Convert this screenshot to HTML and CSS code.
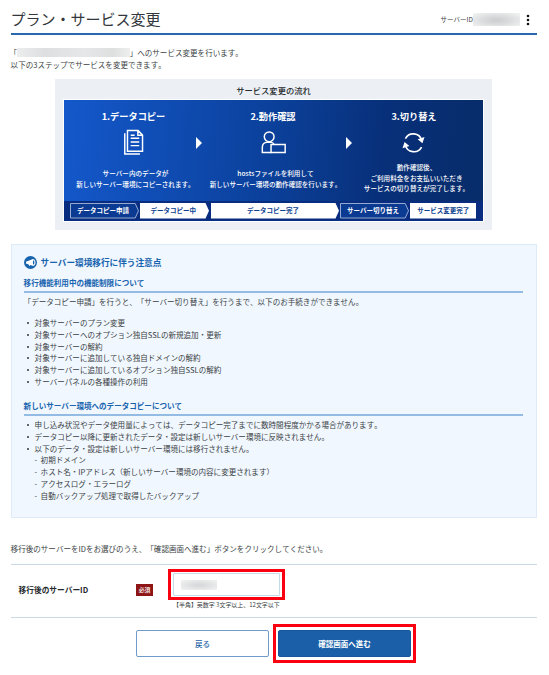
FILE: index.html
```html
<!DOCTYPE html>
<html lang="ja">
<head>
<meta charset="utf-8">
<title>プラン・サービス変更</title>
<link rel="stylesheet" href="styles.css">
</head>
<body>
<main class="page">
  <header class="head">
    <h1>プラン・サービス変更</h1>
    <div class="account">
      <span>サーバーID</span><span class="mask mask-id"></span>
      <svg class="dots" viewBox="0 0 4 12"><circle cx="2" cy="2" r="1.3"/><circle cx="2" cy="6" r="1.3"/><circle cx="2" cy="10" r="1.3"/></svg>
    </div>
  </header>

  <div class="intro">
    <p class="quote">「<span class="mask mask-plan"></span>」へのサービス変更を行います。</p>
    <p>以下の3ステップでサービスを変更できます。</p>
  </div>

  <section class="flow">
    <h2>サービス変更の流れ</h2>
    <div class="panel">
      <div class="steps">
        <div class="step first">
          <h3>1.データコピー</h3>
          <svg class="icon" viewBox="0 0 26 26"><g fill="none" stroke="#fff" stroke-width="1.4"><path d="M7.2 1.5h10.2l4.3 4.4v15.6H7.2zM17.2 1.5v4.6h4.5M10.3 9h8.2M10.3 12.5h8.2M10.3 16h8.2M10.3 6h3.8"/><path d="M4.6 4.2v19.8h14.6"/></g></svg>
          <p>サーバー内のデータが<br>新しいサーバー環境にコピーされます。</p>
        </div>
        <i class="arrow"></i>
        <div class="step">
          <h3>2.動作確認</h3>
          <svg class="icon" viewBox="0 0 26 26"><g fill="none" stroke="#fff" stroke-width="1.4"><circle cx="9.8" cy="7.5" r="4.7"/><path d="M12 22.7H3.2v-4.9c0-3 2-4.9 4.8-4.9h3.4c1.4 0 2.4.7 3 1.7"/><path d="M11.6 15h13.6v7.7H11.6z"/></g></svg>
          <p>hostsファイルを利用して<br>新しいサーバー環境の動作確認を行います。</p>
        </div>
        <i class="arrow"></i>
        <div class="step last">
          <h3>3.切り替え</h3>
          <svg class="icon" viewBox="0 0 26 26"><g fill="none" stroke="#fff" stroke-width="1.6"><path d="M5.2 9.2a8.5 8.5 0 0 1 15.7 1.7M20.8 17.5A8.5 8.5 0 0 1 5.1 15.5"/></g><path fill="#fff" d="M17 9.8l4.6 4 2-6.2zM9 16.4l-4.6-4-2 6.2z"/></svg>
          <p>動作確認後、<br>ご利用料金をお支払いいただき<br>サービスの切り替えが完了します。</p>
        </div>
      </div>
      <div class="bar">
        <div class="tag line"><svg viewBox="0 0 69 16" preserveAspectRatio="none"><path d="M.5.5h64.7l3.3 7.5-3.3 7.5H.5z"/></svg><span>データコピー申請</span></div>
        <div class="tag fill"><svg viewBox="0 0 69 16" preserveAspectRatio="none"><path d="M0 0h65.5l3.5 8-3.5 8H0z"/></svg><span>データコピー中</span></div>
        <div class="tag fill"><svg viewBox="0 0 128 16" preserveAspectRatio="none"><path d="M0 0h124.5l3.5 8-3.5 8H0z"/></svg><span>データコピー完了</span></div>
        <div class="tag line"><svg viewBox="0 0 69 16" preserveAspectRatio="none"><path d="M.5.5h64.7l3.3 7.5-3.3 7.5H.5z"/></svg><span>サーバー切り替え</span></div>
        <div class="tag fill end"><svg viewBox="0 0 66 16" preserveAspectRatio="none"><path d="M0 0h66v16H0z"/></svg><span>サービス変更完了</span></div>
      </div>
    </div>
  </section>

  <section class="notice">
    <h2><svg viewBox="0 0 12 12"><circle cx="6" cy="6" r="6" fill="#1763ae"/><path fill="#fff" d="M1.8 5.2l6.5-2.4c1.8.3 2.3 1.6 2.3 3.2s-.6 2.9-2.2 3.2L5.9 8.4 5 9.2l-1-1.5-2.2-.8z"/><ellipse cx="8.9" cy="6" rx=".7" ry="2" fill="#1763ae"/></svg>サーバー環境移行に伴う注意点</h2>
    <h3>移行機能利用中の機能制限について</h3>
    <p>「データコピー申請」を行うと、「サーバー切り替え」を行うまで、以下のお手続きができません。</p>
    <ul>
      <li>対象サーバーのプラン変更</li>
      <li>対象サーバーへのオプション独自SSLの新規追加・更新</li>
      <li>対象サーバーの解約</li>
      <li>対象サーバーに追加している独自ドメインの解約</li>
      <li>対象サーバーに追加しているオプション独自SSLの解約</li>
      <li>サーバーパネルの各種操作の利用</li>
    </ul>
    <h3 class="second">新しいサーバー環境へのデータコピーについて</h3>
    <ul class="tight">
      <li>申し込み状況やデータ使用量によっては、データコピー完了までに数時間程度かかる場合があります。</li>
      <li>データコピー以降に更新されたデータ・設定は新しいサーバー環境に反映されません。</li>
      <li>以下のデータ・設定は新しいサーバー環境には移行されません。
        <ul class="dash">
          <li>初期ドメイン</li>
          <li>ホスト名・IPアドレス（新しいサーバー環境の内容に変更されます）</li>
          <li>アクセスログ・エラーログ</li>
          <li>自動バックアップ処理で取得したバックアップ</li>
        </ul>
      </li>
    </ul>
  </section>

  <p class="guide">移行後のサーバーをIDをお選びのうえ、「確認画面へ進む」ボタンをクリックしてください。</p>

  <div class="field">
    <span class="label">移行後のサーバーID</span>
    <span class="required">必須</span>
    <div class="entry">
      <div class="mark mark-input"><div class="input"><span class="mask mask-value"></span></div></div>
      <small>【半角】英数字 3文字以上、12文字以下</small>
    </div>
  </div>

  <div class="actions">
    <button class="btn back">戻る</button>
    <div class="mark mark-btn"><button class="btn next">確認画面へ進む</button></div>
  </div>
</main>
</body>
</html>
```

FILE: styles.css
```css
* { box-sizing: border-box; margin: 0; padding: 0; }
body {
  width: 549px;
  height: 675px;
  overflow: hidden;
  background: #fff;
  color: #3b3f44;
  font: 7.55px/11.75px "Noto Sans CJK JP", sans-serif;
  font-kerning: none;
  text-spacing-trim: space-all;
  white-space: nowrap;
}
.page { padding: 0 12px 0 10.6px; }

.head {
  display: flex;
  justify-content: space-between;
  align-items: flex-start;
  height: 35px;
  border-bottom: 2px solid #2a68ae;
}
.head h1 { font-size: 15px; line-height: 20px; font-weight: 400; padding-top: 9px; color: #33373b; }
.account { display: flex; align-items: center; padding: 13px 7px 0 0; height: 26px; font-size: 6.5px; }
.mask { display: inline-block; background: #e3e4e5; }
.mask-id { width: 47px; height: 13px; background: radial-gradient(ellipse at 50% 55%, #cfd0d2 10%, #dedfe0 50%, #f3f4f4 100%); }
.dots { width: 4px; height: 12px; margin-left: 6px; fill: #111; }

.intro { padding-top: 12px; height: 44px; }
.intro p { display: flex; align-items: center; height: 11.75px; }
.intro .quote { margin-left: -1px; }
.mask-plan { width: 112.5px; height: 9px; background: linear-gradient(90deg, #ececed, #dedfe0 25%, #e6e7e8 60%, #dedfdf 85%, #eee); }

.flow { width: 437px; height: 151px; margin-left: 44.4px; padding: 0 8px; background: #ecf0f4; }
.flow h2 { padding-top: 5px; height: 20px; text-align: center; font-size: 8.3px; line-height: 13px; font-weight: 500; color: #25292d; }
.panel { height: 123px; border: 1px solid #fff; background: linear-gradient(95deg, #1458cb 0%, #0b419c 48%, #08307a 75%, #072c69 100%); color: #fff; }
.steps { display: grid; grid-template-columns: 132px 6px 144px 6px 1fr; height: 101px; align-items: start; }
.step { display: flex; flex-direction: column; align-items: center; text-align: center; padding: 9px 2px 0 0; }
.step.first { padding: 9px 0 0 7px; }
.step.last { padding-right: 7px; }
.step h3 { font-size: 9.2px; line-height: 14px; font-weight: 700; }
.icon { width: 27px; height: 27px; margin-top: 6px; }
.step p { margin: 12px -5px 0 0; font-size: 6.58px; line-height: 10.6px; font-weight: 500; }
.step.first p { margin-right: -4px; }
.step.last p { margin-top: 6px; }
.arrow { width: 6px; height: 12px; margin-top: 37px; background: #fff; clip-path: polygon(0 0, 100% 50%, 0 100%); }
.bar { display: grid; grid-template-columns: 69px 69px 128px 69px 66px; column-gap: 1.3px; align-items: center; height: 20px; padding-left: 6px; background: #082d80; }
.tag { display: grid; height: 15.5px; }
.tag svg, .tag span { grid-area: 1 / 1; }
.tag svg { width: 100%; height: 15.5px; }
.tag span { position: relative; line-height: 15px; text-align: center; font-size: 6.5px; font-weight: 700; padding-right: 3px; }
.tag.line path { fill: #0a3a92; stroke: #bfcde6; stroke-width: .8; }
.tag.fill path { fill: #fff; }
.tag.fill span { color: #0c418f; }
.tag.end span { padding-right: 0; }

.notice { margin-top: 14px; height: 274px; padding: 11px 13px 0 12px; border: 1px solid #deebf7; background: #f0f7ff; }
.notice h2 { display: flex; align-items: center; gap: 4px; height: 13px; font-size: 8.65px; font-weight: 700; color: #1763ae; }
.notice h2 svg { width: 13px; height: 13px; }
.notice h3 { height: 17px; margin-top: 7px; font-size: 7.55px; line-height: 13px; font-weight: 700; color: #1763ae; border-bottom: 2px solid #93bbe4; }
.notice p { padding: 3px 0 0; height: 14.5px; line-height: 12px; }
.notice ul { list-style: none; padding-left: 11px; margin-top: 9.5px; }
.notice li { position: relative; line-height: 11.75px; }
.notice li::before { content: ""; position: absolute; left: -8px; top: 5px; width: 2.2px; height: 2.2px; border-radius: 50%; background: #33373b; }
.notice h3.second { margin-top: 11.5px; }
.notice ul.tight { margin-top: 3px; }
.notice ul.dash { margin: 0; padding-left: 6px; }
.notice .dash li::before { content: "-"; left: -6px; top: 0; width: auto; height: auto; background: none; }

.guide { margin-top: 25px; height: 21px; line-height: 12px; }
.field { display: grid; grid-template-columns: 125.4px 32px 1fr; height: 54px; border-top: 1px solid #cbd9e6; border-bottom: 1px solid #cbd9e6; }
.label { padding: 19px 0 0 8px; font-size: 7.7px; line-height: 12px; font-weight: 700; color: #25292d; }
.required { width: 17px; height: 12px; margin-top: 19px; background: #8e1515; color: #fff; font-size: 5.8px; line-height: 11.5px; font-weight: 500; text-align: center; }
.mark { border: 3px solid #fb0010; }
.mark-input { width: 117px; height: 31px; margin-top: 4px; padding: 1px 2px; }
.input { display: flex; align-items: center; height: 23px; padding-left: 7px; border: 1px solid #c3dcea; border-radius: 1px; }
.mask-value { width: 36px; height: 10px; background: radial-gradient(ellipse, #d9dadb 15%, #f2f3f3 100%); }
.entry small { display: block; padding-left: 5px; font-size: 5.98px; line-height: 10px; }
.actions { display: flex; align-items: flex-start; padding-left: 125.4px; }
.btn { width: 133px; height: 27px; border: 1px solid #6f9bca; border-radius: 2px; background: #fff; color: #1d5fa5; font: 500 7.5px/20px "Noto Sans CJK JP", sans-serif; }
.back { margin-top: 12px; }
.mark-btn { width: 143px; height: 39px; margin: 6px 0 0 4px; padding: 3px 2px; }
.btn.next { display: block; border-color: #17589c; background: #1a5fa8; color: #fff; font-weight: 700; }
```
